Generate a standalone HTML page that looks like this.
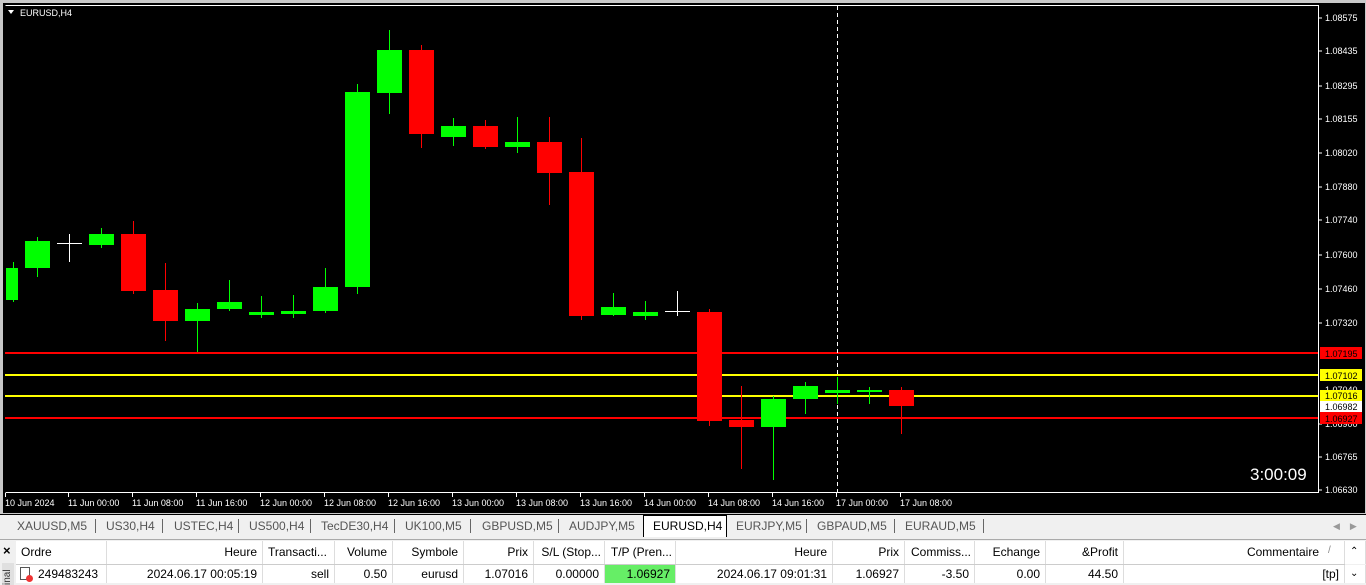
<!DOCTYPE html>
<html><head><meta charset="utf-8"><style>
*{margin:0;padding:0;box-sizing:border-box}
body{width:1366px;height:585px;overflow:hidden;background:#f0f0f0;font-family:"Liberation Sans",Tahoma,sans-serif;position:relative}
.a{position:absolute;white-space:nowrap}
#tabs .t{position:absolute;top:516px;height:20px;font-size:12px;color:#555;line-height:20px;white-space:nowrap}
.sep{position:absolute;top:519px;width:1px;height:14px;background:#666}
.th,.td{position:absolute;font-size:12px;color:#000;line-height:22px;padding:0 5px;border-right:1px solid #ddd;white-space:nowrap;overflow:hidden}
.th{top:541px;height:23px;background:#fff}
.td{top:565px;height:18px;line-height:18px;background:#fff}
</style></head><body>
<svg class="a" style="left:0;top:0" width="1366" height="514" font-family="Liberation Sans,sans-serif" font-size="9" fill="#fff">
<rect x="0" y="0" width="1366" height="514" fill="#c8c8c8"/>
<rect x="3" y="3" width="1362" height="510" fill="#000"/>
<path d="M5.5 5.5H1318.5V492.5H5.5" stroke="#fff" fill="none"/>
<path d="M5 353H1318" stroke="#f00" stroke-width="2"/>
<path d="M5 375H1318" stroke="#ff0" stroke-width="2"/>
<path d="M5 396H1318" stroke="#ff0" stroke-width="2"/>
<path d="M5 418H1318" stroke="#f00" stroke-width="2"/>
<path d="M837.5 6V492" stroke="#fff" stroke-dasharray="4,3"/>
<g stroke-width="1">
<path d="M13.5 262V302" stroke="#0f0"/><rect x="6" y="268" width="12" height="32" fill="#0f0"/>
<path d="M37.5 237V277" stroke="#0f0"/><rect x="25" y="241" width="25" height="27" fill="#0f0"/>
<path d="M69.5 234V262M57 243.5H82" stroke="#fff"/>
<path d="M101.5 228V248" stroke="#0f0"/><rect x="89" y="234" width="25" height="11" fill="#0f0"/>
<path d="M133.5 221V294" stroke="#f00"/><rect x="121" y="234" width="25" height="57" fill="#f00"/>
<path d="M165.5 263V341" stroke="#f00"/><rect x="153" y="290" width="25" height="31" fill="#f00"/>
<path d="M197.5 303V352" stroke="#0f0"/><rect x="185" y="309" width="25" height="12" fill="#0f0"/>
<path d="M229.5 280V311" stroke="#0f0"/><rect x="217" y="302" width="25" height="7" fill="#0f0"/>
<path d="M261.5 296V318" stroke="#0f0"/><rect x="249" y="312" width="25" height="3" fill="#0f0"/>
<path d="M293.5 295V318" stroke="#0f0"/><rect x="281" y="311" width="25" height="3" fill="#0f0"/>
<path d="M325.5 268V313" stroke="#0f0"/><rect x="313" y="287" width="25" height="24" fill="#0f0"/>
<path d="M357.5 84V294" stroke="#0f0"/><rect x="345" y="92" width="25" height="195" fill="#0f0"/>
<path d="M389.5 30V114" stroke="#0f0"/><rect x="377" y="50" width="25" height="43" fill="#0f0"/>
<path d="M421.5 45V148" stroke="#f00"/><rect x="409" y="50" width="25" height="84" fill="#f00"/>
<path d="M453.5 118V146" stroke="#0f0"/><rect x="441" y="126" width="25" height="11" fill="#0f0"/>
<path d="M485.5 120V149" stroke="#f00"/><rect x="473" y="126" width="25" height="21" fill="#f00"/>
<path d="M517.5 117V153" stroke="#0f0"/><rect x="505" y="142" width="25" height="5" fill="#0f0"/>
<path d="M549.5 117V205" stroke="#f00"/><rect x="537" y="142" width="25" height="31" fill="#f00"/>
<path d="M581.5 138V320" stroke="#f00"/><rect x="569" y="172" width="25" height="144" fill="#f00"/>
<path d="M613.5 293V316" stroke="#0f0"/><rect x="601" y="307" width="25" height="8" fill="#0f0"/>
<path d="M645.5 301V320" stroke="#0f0"/><rect x="633" y="312" width="25" height="4" fill="#0f0"/>
<path d="M677.5 291V316M665 311.5H690" stroke="#fff"/>
<path d="M709.5 309V426" stroke="#f00"/><rect x="697" y="312" width="25" height="109" fill="#f00"/>
<path d="M741.5 386V469" stroke="#f00"/><rect x="729" y="420" width="25" height="7" fill="#f00"/>
<path d="M773.5 396V480" stroke="#0f0"/><rect x="761" y="399" width="25" height="28" fill="#0f0"/>
<path d="M805.5 382V414" stroke="#0f0"/><rect x="793" y="386" width="25" height="13" fill="#0f0"/>
<path d="M837.5 377V404" stroke="#0f0"/><rect x="825" y="390" width="25" height="3" fill="#0f0"/>
<path d="M869.5 387V404" stroke="#0f0"/><rect x="857" y="390" width="25" height="2" fill="#0f0"/>
<path d="M901.5 387V434" stroke="#f00"/><rect x="889" y="390" width="25" height="16" fill="#f00"/>
</g>
<path d="M8 10L14 10L11 14Z" fill="#fff"/>
<text x="20" y="16">EURUSD,H4</text>
<g stroke="#fff">
<path d="M1318 18H1322M1318 51H1322M1318 86H1322M1318 119H1322M1318 153H1322M1318 187H1322M1318 220H1322M1318 255H1322M1318 289H1322M1318 323H1322M1318 424H1322M1318 457H1322M1318 490H1322"/>
<path d="M5.5 493V497M68.5 493V497M132.5 493V497M196.5 493V497M260.5 493V497M324.5 493V497M388.5 493V497M452.5 493V497M516.5 493V497M580.5 493V497M644.5 493V497M708.5 493V497M772.5 493V497M836.5 493V497M900.5 493V497"/>
</g>
<g>
<text x="1325" y="21">1.08575</text><text x="1325" y="54">1.08435</text><text x="1325" y="89">1.08295</text><text x="1325" y="122">1.08155</text><text x="1325" y="156">1.08020</text><text x="1325" y="190">1.07880</text><text x="1325" y="223">1.07740</text><text x="1325" y="258">1.07600</text><text x="1325" y="292">1.07460</text><text x="1325" y="326">1.07320</text><text x="1325" y="393">1.07040</text><text x="1325" y="427">1.06900</text><text x="1325" y="460">1.06765</text><text x="1325" y="493">1.06630</text>
</g>
<rect x="1320" y="347" width="42" height="12" fill="#f00"/><text x="1325" y="357" fill="#000">1.07195</text>
<rect x="1320" y="369" width="42" height="12" fill="#ff0"/><text x="1325" y="379" fill="#000">1.07102</text>
<rect x="1320" y="390" width="42" height="11" fill="#ff0"/><text x="1325" y="399" fill="#000">1.07016</text>
<rect x="1320" y="401" width="42" height="11" fill="#fff"/><text x="1325" y="410" fill="#000">1.06982</text>
<rect x="1320" y="412" width="42" height="12" fill="#f00"/><text x="1325" y="422" fill="#000">1.06927</text>
<g font-size="9">
<text x="5" y="506">10 Jun 2024</text><text x="68" y="506">11 Jun 00:00</text><text x="132" y="506">11 Jun 08:00</text><text x="196" y="506">11 Jun 16:00</text><text x="260" y="506">12 Jun 00:00</text><text x="324" y="506">12 Jun 08:00</text><text x="388" y="506">12 Jun 16:00</text><text x="452" y="506">13 Jun 00:00</text><text x="516" y="506">13 Jun 08:00</text><text x="580" y="506">13 Jun 16:00</text><text x="644" y="506">14 Jun 00:00</text><text x="708" y="506">14 Jun 08:00</text><text x="772" y="506">14 Jun 16:00</text><text x="836" y="506">17 Jun 00:00</text><text x="900" y="506">17 Jun 08:00</text>
</g>
<text x="1250" y="480" font-size="17">3:00:09</text>
</svg>
<div id="tabs">
<div class="a" style="left:0;top:514px;width:1366px;height:1px;background:#000"></div>
<div class="a" style="left:643px;top:515px;width:84px;height:22px;background:#fff;border:1px solid #000;border-bottom:none"></div>
<div class="t" style="left:17px">XAUUSD,M5</div><div class="sep" style="left:95px"></div>
<div class="t" style="left:106px">US30,H4</div><div class="sep" style="left:162px"></div>
<div class="t" style="left:174px">USTEC,H4</div><div class="sep" style="left:238px"></div>
<div class="t" style="left:249px">US500,H4</div><div class="sep" style="left:310px"></div>
<div class="t" style="left:321px">TecDE30,H4</div><div class="sep" style="left:394px"></div>
<div class="t" style="left:405px">UK100,M5</div><div class="sep" style="left:470px"></div>
<div class="t" style="left:482px">GBPUSD,M5</div><div class="sep" style="left:558px"></div>
<div class="t" style="left:569px">AUDJPY,M5</div>
<div class="t" style="left:653px;color:#000">EURUSD,H4</div>
<div class="t" style="left:736px">EURJPY,M5</div><div class="sep" style="left:806px"></div>
<div class="t" style="left:817px">GBPAUD,M5</div><div class="sep" style="left:894px"></div>
<div class="t" style="left:905px">EURAUD,M5</div><div class="sep" style="left:983px"></div>
<div class="t" style="left:1333px;font-size:9px;color:#999">◀&nbsp;&nbsp;&nbsp;&nbsp;▶</div>
</div>
<div class="a" style="left:0;top:539px;width:1366px;height:1px;background:#aaa"></div>
<div class="a" style="left:3px;top:543px;font-size:13px;font-weight:bold">×</div>
<div class="a" style="left:2px;top:563px;width:12px;height:22px;background:#e0e0e0;font-size:10px;color:#333;writing-mode:vertical-rl;transform:rotate(180deg)">inal</div>
<div class="th" style="left:16px;width:91px">Ordre</div>
<div class="th" style="left:107px;width:156px;text-align:right">Heure</div>
<div class="th" style="left:263px;width:72px">Transacti...</div>
<div class="th" style="left:335px;width:58px;text-align:right">Volume</div>
<div class="th" style="left:393px;width:71px;text-align:right">Symbole</div>
<div class="th" style="left:464px;width:70px;text-align:right">Prix</div>
<div class="th" style="left:534px;width:71px;text-align:right;padding:0 3px">S/L (Stop...</div>
<div class="th" style="left:605px;width:71px;text-align:right;padding:0 3px">T/P (Pren...</div>
<div class="th" style="left:676px;width:157px;text-align:right">Heure</div>
<div class="th" style="left:833px;width:72px;text-align:right">Prix</div>
<div class="th" style="left:905px;width:70px;text-align:right;padding:0 3px">Commiss...</div>
<div class="th" style="left:975px;width:71px;text-align:right">Echange</div>
<div class="th" style="left:1046px;width:78px;text-align:right">&amp;Profit</div>
<div class="th" style="left:1124px;width:221px;text-align:right;padding-right:25px">Commentaire</div>
<div class="a" style="left:1328px;top:545px;font-size:10px;color:#888">/</div>
<div class="th" style="left:1345px;width:21px;font-size:10px">⌃</div>
<div class="td" style="left:16px;width:91px;padding-left:22px">249483243</div>
<div class="a" style="left:20px;top:567px;width:10px;height:13px;border:1px solid #555;background:#fff"></div>
<div class="a" style="left:26px;top:575px;width:7px;height:7px;border-radius:50%;background:#e33"></div>
<div class="td" style="left:107px;width:156px;text-align:right">2024.06.17 00:05:19</div>
<div class="td" style="left:263px;width:72px;text-align:right">sell</div>
<div class="td" style="left:335px;width:58px;text-align:right">0.50</div>
<div class="td" style="left:393px;width:71px;text-align:right">eurusd</div>
<div class="td" style="left:464px;width:70px;text-align:right">1.07016</div>
<div class="td" style="left:534px;width:71px;text-align:right">0.00000</div>
<div class="td" style="left:605px;width:71px;text-align:right;background:#66ee66">1.06927</div>
<div class="td" style="left:676px;width:157px;text-align:right">2024.06.17 09:01:31</div>
<div class="td" style="left:833px;width:72px;text-align:right">1.06927</div>
<div class="td" style="left:905px;width:70px;text-align:right">-3.50</div>
<div class="td" style="left:975px;width:71px;text-align:right">0.00</div>
<div class="td" style="left:1046px;width:78px;text-align:right">44.50</div>
<div class="td" style="left:1124px;width:221px;text-align:right">[tp]</div>
<div class="td" style="left:1345px;width:21px;font-size:10px">⌄</div>
<div class="a" style="left:16px;top:564px;width:1329px;height:1px;background:#ccc"></div>
</body></html>
